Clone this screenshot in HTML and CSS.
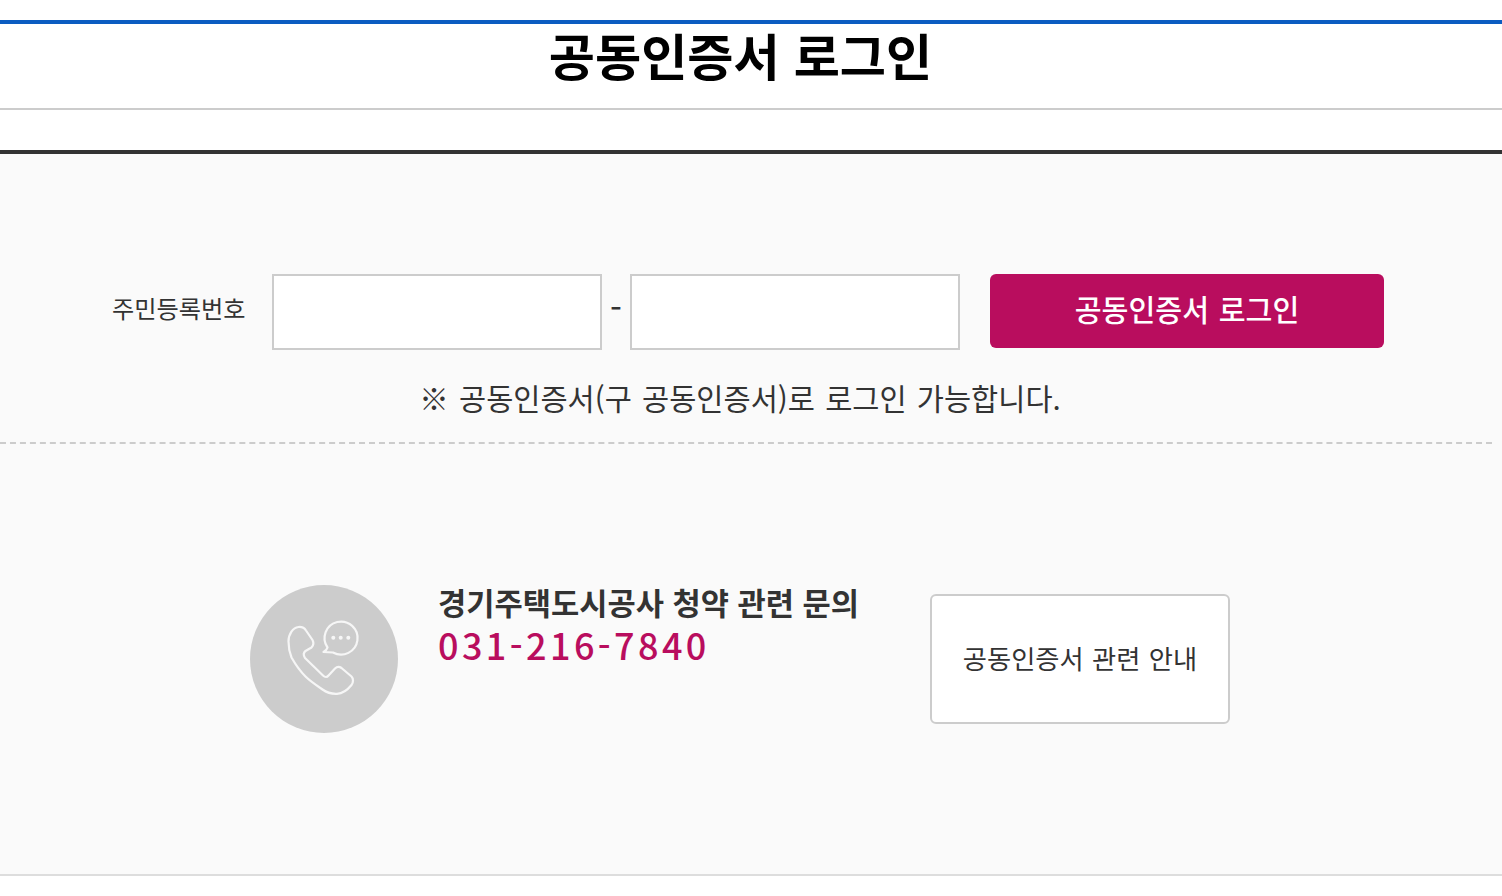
FILE: index.html
```html
<!DOCTYPE html>
<html lang="ko">
<head>
<meta charset="utf-8">
<title>공동인증서 로그인</title>
<link rel="stylesheet" href="styles.css">
</head>
<body>
<header class="head"><h1 class="title">공동인증서 로그인</h1></header>
<main class="panel">
  <section class="login">
    <form class="form">
      <label class="label" for="rrn1">주민등록번호</label>
      <input class="field" id="rrn1" type="text">
      <span class="dash">-</span>
      <input class="field" type="password">
      <button class="submit" type="button">공동인증서 로그인</button>
    </form>
    <p class="note">※ 공동인증서(구 공동인증서)로 로그인 가능합니다.</p>
  </section>
  <section class="contact">
    <div class="avatar">
      <svg class="phone" width="148" height="148" viewBox="0 0 148 148" fill="none" stroke="#f6f6f6" stroke-width="2.2" stroke-linejoin="round" stroke-linecap="round">
        <path d="M38.5 56.5C38.5 49 43 42.5 48.5 42C52 41.7 54.5 43 56 45.5L62.5 55C64 58 63.5 60.5 61.5 62.5L55.5 66C53.5 67.5 53.5 70.5 55 73L73 90.5C75 92.5 77 92.5 78.5 90.5L85 83.5C87 81.5 89.5 81.5 91.5 83L101.5 91.5C103.5 93.5 103.5 97.5 101.5 100C97.5 105 92.5 108.5 87 108.8C82 109 77 107.8 72.5 104.5C66 100 60 96 55.5 91.5C50 86 45.5 79.5 41.5 72.5C39.5 67.5 38.5 62 38.5 56.5Z"/>
        <path d="M77.5 62.5A16.5 16.5 0 1 1 83 67.5L73.5 67C75.5 66 77 64.5 77.5 62.5Z"/>
        <g fill="#f6f6f6" stroke="none">
          <circle cx="83.3" cy="52.7" r="2"/>
          <circle cx="90.7" cy="52.7" r="2"/>
          <circle cx="98.3" cy="52.7" r="2"/>
        </g>
      </svg>
    </div>
    <div class="info">
      <h2 class="info-title">경기주택도시공사 청약 관련 문의</h2>
      <p class="tel">031-216-7840</p>
    </div>
    <a class="guide" href="#">공동인증서 관련 안내</a>
  </section>
</main>
</body>
</html>
```
FILE: styles.css
```css
* { box-sizing: border-box; }
html, body { margin: 0; padding: 0; background: #fff; }
body {
  font-family: "Noto Sans CJK KR", "Noto Sans", sans-serif;
  color: #333;
  height: 896px;
  overflow: hidden;
  padding-top: 20px;
}
.head {
  height: 90px;
  border-top: 4px solid #0b5cc1;
  border-bottom: 2px solid #ccc;
  margin-bottom: 40px;
}
.title {
  margin: 0;
  height: 64px;
  line-height: 60px;
  font-size: 50.2px;
  font-weight: 700;
  color: #000;
  text-align: center;
  padding-right: 21px;
}
.panel {
  height: 726px;
  background: #fafafa;
  border-top: 4px solid #333;
  border-bottom: 2px solid #ddd;
}
.login {
  height: 290px;
  margin-right: 10px;
  border-bottom: 2px dashed #ccc;
  padding-top: 120px;
}
.form {
  display: flex;
  align-items: flex-start;
  padding-left: 112px;
}
.label {
  width: 160px;
  height: 76px;
  line-height: 68px;
  font-size: 24.2px;
}
.field {
  width: 330px;
  height: 76px;
  border: 2px solid #ccc;
  background: #fff;
  padding: 0;
  outline: 0;
}
.dash {
  width: 28px;
  text-align: center;
  line-height: 66px;
  font-size: 34px;
  font-weight: 400;
}
.submit {
  width: 394px;
  height: 74px;
  margin-left: 30px;
  border: 0;
  border-radius: 6px;
  background: #b90d5e;
  color: #fff;
  font: 500 29.2px/68px "Noto Sans CJK KR", sans-serif;
  word-spacing: 1.5px;
  padding: 0 0 6px;
}
.note {
  margin: 25px 0 0;
  line-height: 44px;
  font-size: 29.5px;
  word-spacing: 2px;
  text-align: center;
  padding-right: 12px;
}
.contact {
  display: flex;
  align-items: flex-start;
  padding: 141px 0 0 250px;
}
.avatar {
  width: 148px;
  height: 148px;
  border-radius: 50%;
  background: #ccc;
  flex: none;
}
.phone { display: block; }
.info { width: 532px; padding-left: 40px; }
.info-title {
  margin: 0;
  font-size: 30.7px;
  font-weight: 700;
  line-height: 34px;
}
.tel {
  margin: 3px 0 0;
  font-size: 36px;
  font-weight: 500;
  line-height: 44px;
  letter-spacing: 3.4px;
  color: #b90d5e;
}
.guide {
  width: 300px;
  height: 130px;
  margin-top: 9px;
  border: 2px solid #ccc;
  border-radius: 6px;
  background: #fff;
  color: #333;
  font-size: 26.3px;
  word-spacing: 1px;
  line-height: 124px;
  text-align: center;
  text-decoration: none;
}
```
